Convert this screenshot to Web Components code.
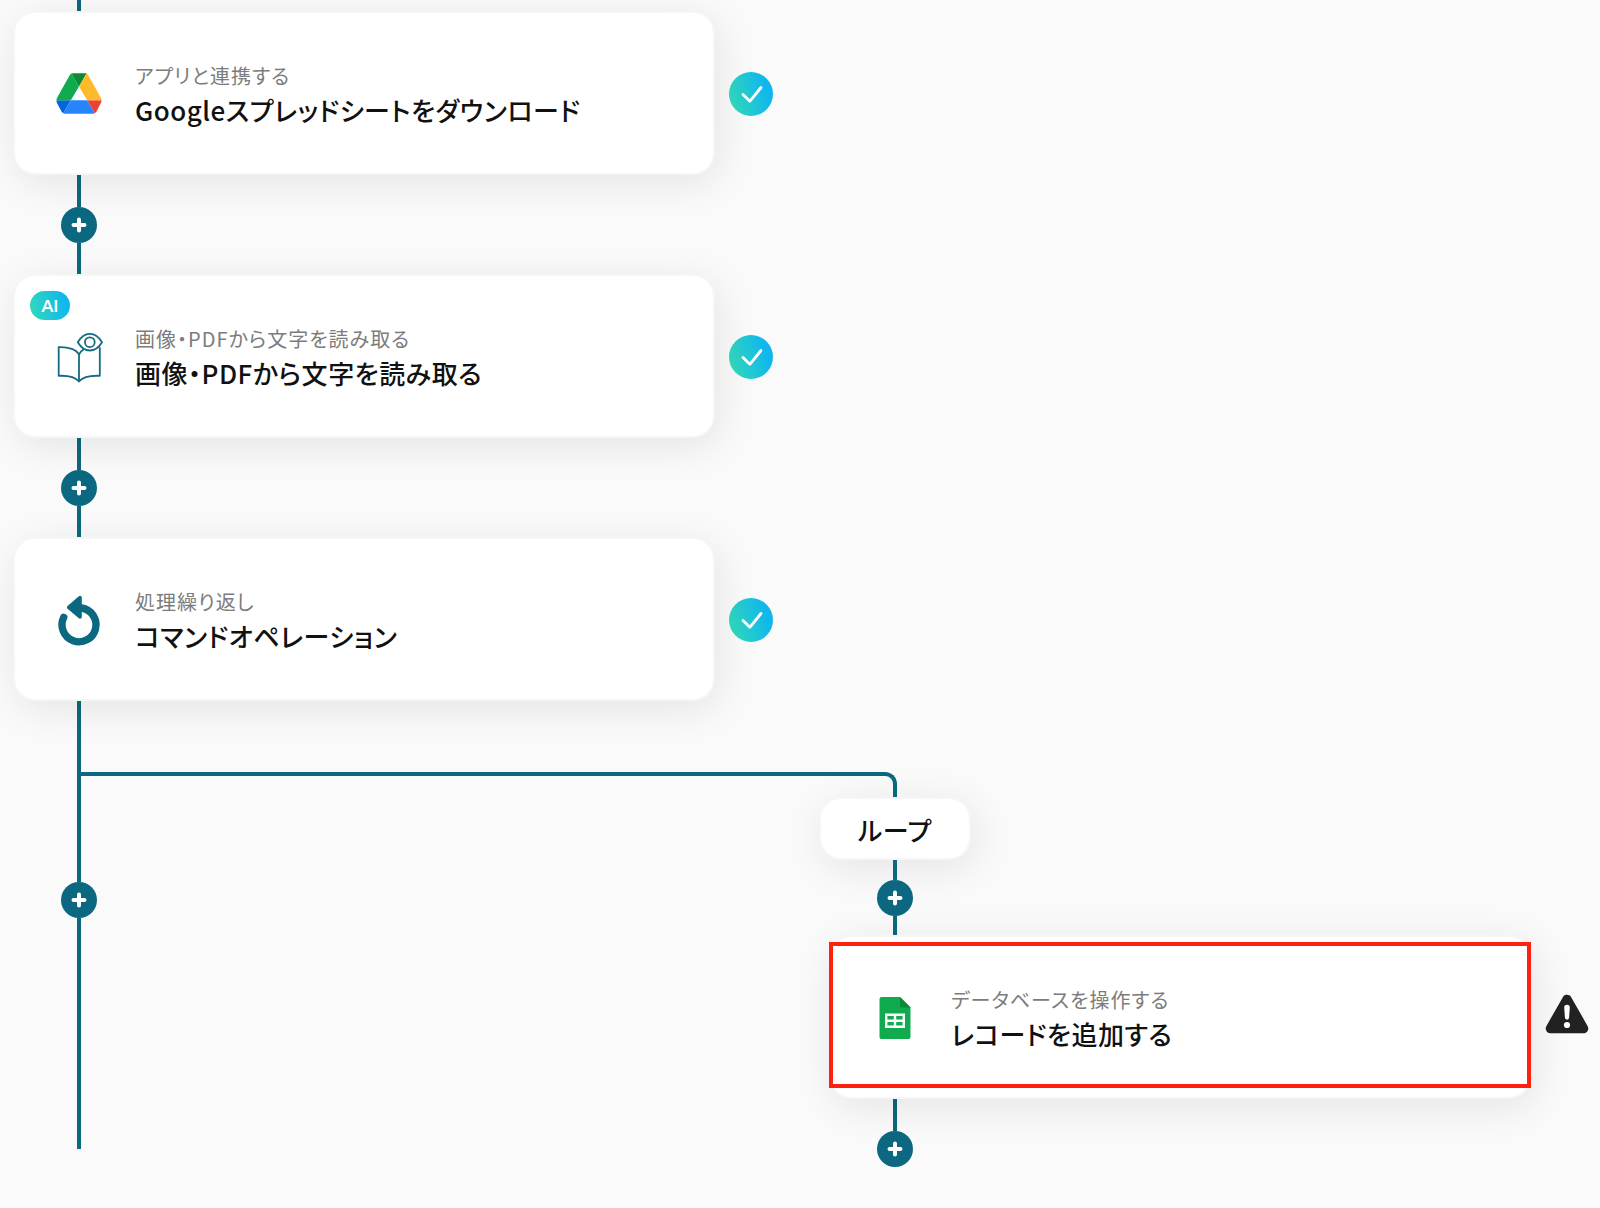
<!DOCTYPE html>
<html lang="ja">
<head>
<meta charset="utf-8">
<meta name="viewport" content="width=device-width, initial-scale=1">
<title>フロー</title>
<style>
  :root {
    --teal: #0b6880;
    --ink: #111;
    --muted: #7c7c7c;
    --canvas: #fafafa;
    --card-width: 43.9vw;
    --lane-pitch: 51vw;
    --rail: 132px;
    --shadow: 4px 8px 40px rgba(0, 0, 0, .09);
  }
  body {
    margin: 0;
    background: var(--canvas);
    color: var(--ink);
    font-family: "Noto Sans CJK JP", "Noto Sans", sans-serif;
    font-feature-settings: "palt";
  }
</style>
</head>
<body>
<flow-canvas></flow-canvas>

<script>
const define = (name, html, setup) => {
  const template = document.createElement('template');
  template.innerHTML = html;
  customElements.define(name, class extends HTMLElement {
    constructor() {
      super();
      this.attachShadow({ mode: 'open' }).append(template.content.cloneNode(true));
    }
    connectedCallback() { if (setup) setup(this, this.shadowRoot); }
  });
};

/* Vertical line segment; grows with the space that its parent gives it. */
define('flow-line', `
<style>
  :host { display: block; width: 4px; flex: 1; background: var(--teal); }
</style>`);

/* Round button that inserts a step. */
define('add-step', `
<style>
  :host { display: block; flex: none; }
  button { display: grid; place-items: center; width: 36px; height: 36px; padding: 0; border: 0;
    border-radius: 50%; background: var(--teal); cursor: pointer; }
  svg { width: 16px; height: 16px; }
</style>
<button type="button" aria-label="ステップを追加">
  <svg viewBox="0 0 16 16" fill="none" stroke="#fff" stroke-width="4" stroke-linecap="round" aria-hidden="true">
    <path d="M8 2.500v11M2.500 8h11"/>
  </svg>
</button>`);

/* Line, add button, line: sits between two steps. */
define('flow-connector', `
<style>
  :host { display: flex; flex-direction: column; align-items: center; width: var(--rail); height: 99px; }
  :host([short]) { height: 75px; }
  :host([end]) { height: 68px; }
  :host([end]) .after { display: none; }
</style>
<flow-line></flow-line><add-step></add-step><flow-line class="after"></flow-line>`);

define('ai-badge', `
<style>
  :host { display: grid; place-items: center; width: 40px; height: 29px; border-radius: 15px;
    background: linear-gradient(75deg, #33dbba, #10b7ec 85%); color: #fff;
    font: 700 17px/29px Lato, Inter, sans-serif; letter-spacing: 0; }
</style>
<span>AI</span>`);

define('status-ok', `
<style>
  :host { display: block; flex: none; width: 44px; height: 44px; padding-top: 2px; }
  svg { display: block; width: 100%; height: 100%; }
</style>
<svg viewBox="0 0 44 44" role="img" aria-label="完了">
  <defs><linearGradient id="g" x1="0" y1=".65" x2="1" y2=".35">
    <stop offset="0" stop-color="#33dbba"/><stop offset=".85" stop-color="#10b7ec"/>
  </linearGradient></defs>
  <circle cx="22" cy="22" r="22" fill="url(#g)"/>
  <path d="M14 22.500l6.800 6.800L32 15.500" fill="none" stroke="#fff" stroke-width="2.800" stroke-linecap="round" stroke-linejoin="round"/>
</svg>`);

define('status-warning', `
<style>
  :host { display: block; flex: none; width: 44px; height: 40px; padding-bottom: 6px; }
  svg { display: block; width: 100%; height: 100%; }
</style>
<svg viewBox="0 0 44 40" role="img" aria-label="警告">
  <path d="M22 5.500L38.500 34.500H5.500z" fill="#222" stroke="#222" stroke-width="9.600" stroke-linejoin="round"/>
  <path d="M19.200 13.600a2.800 2.800 0 0 1 5.600 0l-.7 10a2.100 2.100 0 0 1-4.200 0z" fill="#fff"/>
  <circle cx="22" cy="31" r="3.100" fill="#fff"/>
</svg>`);

/* Step icons, each drawn in a 52px square. */
const ICONS = {
  drive: `<svg viewBox="0 1 52 52">
    <path d="M3.500 33.200H17.800L10.300 46.200C9.500 45.800 8.900 45.200 8.500 44.500L4 35.900C3.600 35.100 3.500 34.200 3.500 33.200z" fill="#0266da"/>
    <path d="M17.800 33.200H34.200L41.700 46.200C41 46.600 40.200 46.800 39.300 46.800H12.700C11.800 46.800 11 46.600 10.300 46.200z" fill="#2684fc"/>
    <path d="M34.200 33.200H48.500C48.500 34.100 48.400 35 48 35.800L43.500 44.500C43.100 45.200 42.500 45.800 41.700 46.200z" fill="#ea4335"/>
    <path d="M26 19.400L18.500 6.400C17.700 6.800 17.100 7.400 16.700 8.200L4.100 30.700C3.700 31.500 3.500 32.300 3.500 33.200H17.800z" fill="#0fab4e"/>
    <path d="M26 19.400L33.500 6.400C32.800 6 31.900 6.200 31.100 6.200H20.900C20 6.200 19.200 6.100 18.500 6.400z" fill="#0a8a36"/>
    <path d="M26 19.400L33.500 6.400C34.300 6.800 34.900 7.400 35.300 8.200L47.900 30.700C48.300 31.500 48.500 32.300 48.500 33.200H34.200z" fill="#ffba2c"/>
  </svg>`,
  book: `<svg viewBox="0 -2 52 52" fill="none" stroke="#156b82" stroke-width="1.800" stroke-linejoin="round" stroke-linecap="round">
    <path d="M26 21.500V48.500M26 21.500C23.500 17 16 13.600 5.700 14.100V42.800C14 42.400 22 43.800 26 48.500C30 43.800 38 42.400 46.800 42.800V15"/>
    <path d="M26 21.500C26.900 19.500 28.500 17.700 30.500 16.500"/>
    <path d="M24.800 9.200C28 3.800 32 .9 36.800 .9S45.800 3.800 49 9.200C45.800 14.600 41.600 17.500 36.800 17.500S28 14.600 24.800 9.200z"/>
    <circle cx="36.800" cy="9.200" r="4.900"/>
  </svg>`,
  loop: `<svg viewBox="0 -1 52 52">
    <path d="M28.500 13A17 17 0 1 1 10.700 22.400" fill="none" stroke="#0b6880" stroke-width="7.400" stroke-linecap="round"/>
    <path d="M15.700 12.300L27 2.700V22z" fill="#0b6880" stroke="#0b6880" stroke-width="3.600" stroke-linejoin="round"/>
  </svg>`,
  sheets: `<svg viewBox="0 0 52 52">
    <path d="M12.600 5H31L41.500 15.500V44.400A2.600 2.600 0 0 1 38.900 47H13.100A2.600 2.600 0 0 1 10.500 44.400V7.100A2.100 2.100 0 0 1 12.600 5z" fill="#0fab4e"/>
    <path d="M31 5L41.500 15.500H31z" fill="#0a8a36"/>
    <path fill="#fff" fill-rule="evenodd" d="M16 21.500H36V36H16zM18.400 23.900V27.500H24.800V23.900zM27.200 23.900V27.500H33.600V23.900zM18.400 29.900V33.500H24.800V29.900zM27.200 29.900V33.500H33.600V29.900z"/>
  </svg>`
};
define('step-icon', `
<style>
  :host { display: block; flex: none; width: 52px; height: 52px; }
  svg { display: block; width: 100%; height: 100%; overflow: visible; }
</style>`, (host, root) => {
  if (!root.querySelector('svg')) root.innerHTML += ICONS[host.getAttribute('name')];
});

/* One step: card with icon and two texts, and its status beside it. */
define('flow-step', `
<style>
  :host { display: flex; align-items: center; gap: 14px; }
  article { box-sizing: border-box; position: relative; flex: none; display: flex; align-items: center; gap: 30px;
    width: var(--card-width); min-height: 164px; padding: 2px 38px 0; border: 2px solid #f6f6f6;
    border-radius: 22px; background: #fff; background-clip: padding-box; box-shadow: var(--shadow); }
  p, h2 { margin: 0; white-space: nowrap; }
  p { color: var(--muted); font-size: 20px; line-height: 32px; font-weight: 400; letter-spacing: .05em; }
  h2 { font-size: 26px; line-height: 36px; font-weight: 500; letter-spacing: .02em; }
  .badge { position: absolute; top: 15px; left: 15px; }
  .mark { display: none; position: absolute; inset: 5px -2px 9px -2px; border: 4px solid #ff2010; }
  :host([marked]) .mark { display: block; }
</style>
<article>
  <slot name="icon"></slot>
  <div><p><slot name="kind"></slot></p><h2><slot></slot></h2></div>
  <div class="badge"><slot name="badge"></slot></div>
  <div class="mark"></div>
</article>
<slot name="status"></slot>`);

define('branch-label', `
<style>
  :host { display: flex; justify-content: center; width: var(--rail); }
  span { box-sizing: border-box; flex: none; width: 152px; padding: 2px 30px 0; border: 2px solid #f6f6f6;
    border-radius: 22px; background: #fff; background-clip: padding-box; box-shadow: var(--shadow);
    font-size: 26px; line-height: 57px; font-weight: 500; letter-spacing: .02em; text-align: center; }
</style>
<span><slot></slot></span>`);

/* Trunk on the left, with a branch that leaves it to the right. */
define('flow-branch', `
<style>
  :host { display: flex; }
  .trunk { display: flex; flex: none; width: var(--lane-pitch); }
  .rail { display: flex; flex-direction: column; align-items: center; flex: none; width: var(--rail); height: 448px; }
  .rail .lead { flex: 0 0 181px; }
  .over { flex: 1; height: 4px; margin: 71px 0 0 -64px; background: var(--teal); }
  .lane { display: flex; flex-direction: column; padding-top: 71px; }
  .elbow { box-sizing: border-box; width: 68px; height: 25px; border: solid var(--teal);
    border-width: 4px 4px 0 0; border-top-right-radius: 12px; }
</style>
<div class="trunk">
  <div class="rail"><flow-line class="lead"></flow-line><add-step></add-step><flow-line></flow-line></div>
  <div class="over"></div>
</div>
<div class="lane"><div class="elbow"></div><slot></slot></div>`);

define('flow-canvas', `
<style>
  :host { display: block; min-height: 100vh; box-sizing: border-box; padding: 0 0 40px 13px; overflow: hidden; }
  .entry { display: flex; justify-content: center; width: var(--rail); height: 11px; }
  .entry flow-line { flex: none; }
</style>
<main>
  <div class="entry"><flow-line></flow-line></div>
  <flow-step>
    <step-icon slot="icon" name="drive"></step-icon>
    <span slot="kind">アプリと連携する</span>Googleスプレッドシートをダウンロード
    <status-ok slot="status"></status-ok>
  </flow-step>
  <flow-connector></flow-connector>
  <flow-step>
    <ai-badge slot="badge"></ai-badge>
    <step-icon slot="icon" name="book"></step-icon>
    <span slot="kind">画像・PDFから文字を読み取る</span>画像・PDFから文字を読み取る
    <status-ok slot="status"></status-ok>
  </flow-step>
  <flow-connector></flow-connector>
  <flow-step>
    <step-icon slot="icon" name="loop"></step-icon>
    <span slot="kind">処理繰り返し</span>コマンドオペレーション
    <status-ok slot="status"></status-ok>
  </flow-step>
  <flow-branch>
    <branch-label>ループ</branch-label>
    <flow-connector short></flow-connector>
    <flow-step marked>
      <step-icon slot="icon" name="sheets"></step-icon>
      <span slot="kind">データベースを操作する</span>レコードを追加する
      <status-warning slot="status"></status-warning>
    </flow-step>
    <flow-connector end></flow-connector>
  </flow-branch>
</main>`);
</script>
</body>
</html>
